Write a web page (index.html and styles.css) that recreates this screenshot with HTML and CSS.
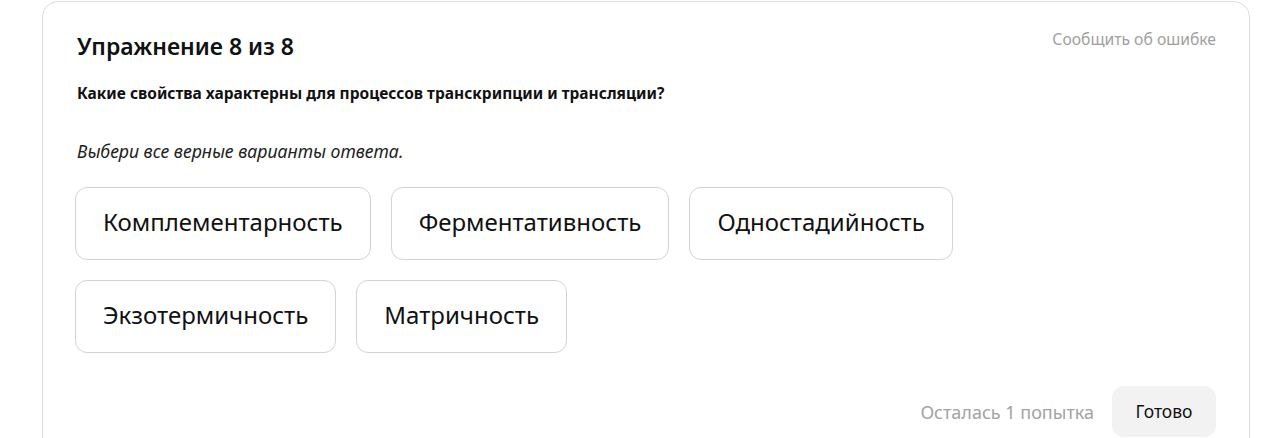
FILE: index.html
```html
<!DOCTYPE html>
<html lang="ru">
<head>
<meta charset="utf-8">
<link rel="stylesheet" href="styles.css">
</head>
<body>
<div class="card">
  <div class="head">
    <h1 class="title">Упражнение 8 из 8</h1>
    <a class="report">Сообщить об ошибке</a>
  </div>
  <p class="question">Какие свойства характерны для процессов транскрипции и трансляции?</p>
  <p class="hint">Выбери все верные варианты ответа.</p>
  <div class="options">
    <button class="opt">Комплементарность</button>
    <button class="opt">Ферментативность</button>
    <button class="opt">Одностадийность</button>
    <button class="opt">Экзотермичность</button>
    <button class="opt">Матричность</button>
  </div>
  <div class="foot">
    <span class="attempts">Осталась 1 попытка</span>
    <button class="done">Готово</button>
  </div>
</div>
</body>
</html>
```
FILE: styles.css
```css
html, body {
  margin: 0;
  padding: 0;
  background: #fff;
}
body {
  font-family: "Noto Sans", "Open Sans", sans-serif;
  color: #111;
}
.card {
  margin: 1px 0 0 42px;
  width: 1139px;
  height: 470px;
  border: 1px solid #dcdcdc;
  border-radius: 16px;
  padding: 0 33px 0 34px;
}
.head {
  display: flex;
  justify-content: space-between;
  align-items: flex-start;
  padding-top: 28px;
}
.title {
  margin: 0;
  font-size: 23px;
  font-weight: 600;
  line-height: 32px;
}
.report {
  font-size: 15.7px;
  color: #a0a0a0;
  line-height: 22px;
  margin-top: -2px;
}
.question {
  margin: 19px 0 0;
  font-size: 15.5px;
  font-weight: 700;
  line-height: 24px;
}
.hint {
  margin: 33px 0 0;
  font-size: 17.7px;
  font-style: italic;
  line-height: 26px;
  color: #222;
}
.options {
  display: flex;
  flex-wrap: wrap;
  gap: 20px;
  margin: 23px 0 0 -2px;
  max-width: 900px;
}
.opt {
  font-family: inherit;
  font-size: 24px;
  color: #111;
  background: #fff;
  border: 1px solid #d3d3d3;
  border-radius: 12px;
  height: 73px;
  padding: 0 27px 4px;
}
.foot {
  display: flex;
  justify-content: flex-end;
  align-items: center;
  gap: 18px;
  margin-top: 33px;
}
.attempts {
  font-size: 18px;
  color: #a3a3a3;
}
.done {
  font-family: inherit;
  font-size: 17.5px;
  color: #111;
  background: #f2f2f2;
  border: none;
  border-radius: 12px;
  height: 51px;
  width: 104px;
  padding: 0 0 2px;
}
```
